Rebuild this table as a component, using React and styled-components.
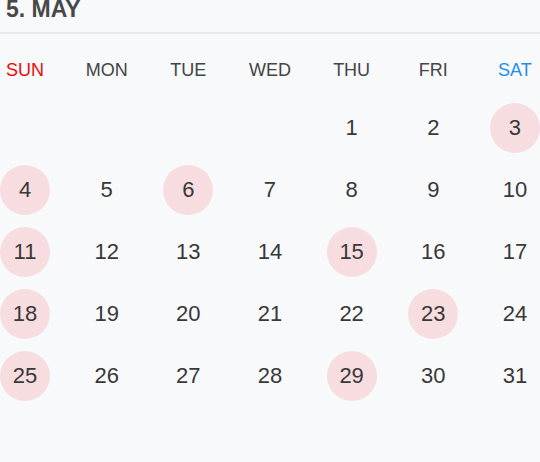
import React from 'react'
import styled, { createGlobalStyle } from 'styled-components'

const GlobalStyle = createGlobalStyle`
html, body {
  margin: 0;
  padding: 0;
  background: #f8f9fb;
  font-family: "Liberation Sans", Arial, sans-serif;
}
`

const Page = styled.main`
width: 540px;
min-height: 462px;
background: #f8f9fb;
`

const Header = styled.h1`
margin: 0;
height: 32px;
padding: 0 6px;
font-size: 23px;
line-height: 19px;
font-weight: 700;
color: #484848;
border-bottom: 2px solid #e6e8eb;
`

const Row = styled.div`
display: grid;
grid-template-columns: repeat(7, 50px);
justify-content: space-between;
`

const Weekdays = styled(Row)`
margin-top: 11px;
`

const Dates = styled(Row)`
margin-top: 8px;
row-gap: 12px;
`

const Weekday = styled.div`
height: 50px;
line-height: 50px;
text-align: center;
font-size: 18px;
color: ${p => p.$tone === 'sun' ? '#ee0a0a' : p.$tone === 'sat' ? '#1f8ef1' : '#444'};
white-space: nowrap;
`

const Day = styled.div`
width: 50px;
height: 50px;
line-height: 50px;
border-radius: 50%;
text-align: center;
font-size: 22px;
color: #383838;
background: ${p => p.$marked ? '#f7dde0' : 'transparent'};
`

const days = ['SUN', 'MON', 'TUE', 'WED', 'THU', 'FRI', 'SAT']
const marked = [3, 4, 6, 11, 15, 18, 23, 25, 29]
const offset = 4

export default function App () {
  const cells = []
  for (let i = 0; i < offset; i++) cells.push(<Day key={'e' + i} />)
  for (let d = 1; d <= 31; d++) {
    cells.push(<Day key={d} $marked={marked.includes(d)}>{d}</Day>)
  }

  return (
    <Page>
      <GlobalStyle />
      <Header>5. MAY</Header>
      <Weekdays>
        {days.map(d => (
          <Weekday key={d} $tone={d === 'SUN' ? 'sun' : d === 'SAT' ? 'sat' : ''}>{d}</Weekday>
        ))}
      </Weekdays>
      <Dates>{cells}</Dates>
    </Page>
  )
}
